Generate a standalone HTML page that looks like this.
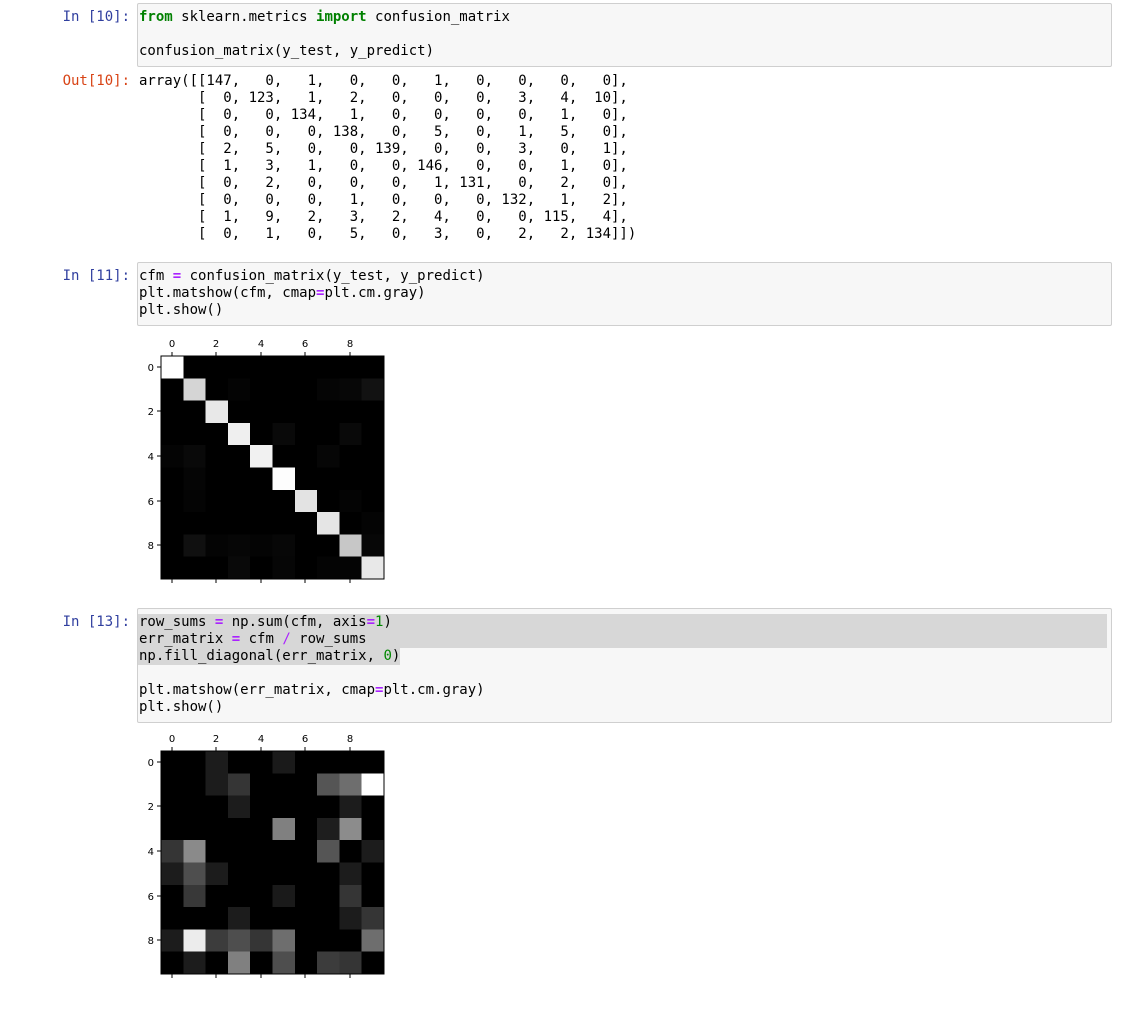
<!DOCTYPE html>
<html><head><meta charset="utf-8"><style>
body{margin:0;background:#fff;width:1128px;height:1011px;overflow:hidden;position:relative;font-family:"DejaVu Sans Mono","Liberation Mono",monospace;font-size:14px;}
pre{margin:0;font-family:inherit;font-size:14px;line-height:17px;position:absolute;}
.p{position:absolute;width:70px;text-align:right;left:60px;font-family:inherit;line-height:17px;}
.in{color:#303f9f}.out{color:#d84315}
.box{position:absolute;left:137px;width:973px;background:#f7f7f7;border:1px solid #cfcfcf;border-radius:2px;}
.k{color:#008000;font-weight:bold}.o{color:#aa22ff;font-weight:bold}.n{color:#008800}
.sel{position:absolute;background:#d7d7d7}
svg{position:absolute}
</style></head><body>
<div class="p in" style="top:9px">In&nbsp;[10]:</div>
<div class="box" style="top:3px;height:62px"></div>
<pre style="left:139px;top:9px"><span class="k">from</span> sklearn.metrics <span class="k">import</span> confusion_matrix

confusion_matrix(y_test, y_predict)</pre>
<div class="p out" style="top:73px">Out[10]:</div>
<pre style="left:139px;top:73px">array([[147,   0,   1,   0,   0,   1,   0,   0,   0,   0],
       [  0, 123,   1,   2,   0,   0,   0,   3,   4,  10],
       [  0,   0, 134,   1,   0,   0,   0,   0,   1,   0],
       [  0,   0,   0, 138,   0,   5,   0,   1,   5,   0],
       [  2,   5,   0,   0, 139,   0,   0,   3,   0,   1],
       [  1,   3,   1,   0,   0, 146,   0,   0,   1,   0],
       [  0,   2,   0,   0,   0,   1, 131,   0,   2,   0],
       [  0,   0,   0,   1,   0,   0,   0, 132,   1,   2],
       [  1,   9,   2,   3,   2,   4,   0,   0, 115,   4],
       [  0,   1,   0,   5,   0,   3,   0,   2,   2, 134]])</pre>

<div class="p in" style="top:268px">In&nbsp;[11]:</div>
<div class="box" style="top:262px;height:62px"></div>
<pre style="left:139px;top:268px">cfm <span class="o">=</span> confusion_matrix(y_test, y_predict)
plt.matshow(cfm, cmap<span class="o">=</span>plt.cm.gray)
plt.show()</pre>

<svg style="left:130px;top:330px" width="270" height="260" font-family="DejaVu Sans, Liberation Sans, sans-serif" font-size="10" fill="#000">
<g transform="translate(31,26) scale(22.3,22.3)" shape-rendering="crispEdges">
<rect width="10" height="10" fill="#000"/>
<rect x="0" y="0" width="1" height="1" fill="#fff"/>
<rect x="1" y="1" width="1" height="1" fill="#d5d5d5"/>
<rect x="2" y="2" width="1" height="1" fill="#e8e8e8"/>
<rect x="3" y="3" width="1" height="1" fill="#efefef"/>
<rect x="4" y="4" width="1" height="1" fill="#f1f1f1"/>
<rect x="5" y="5" width="1" height="1" fill="#fdfdfd"/>
<rect x="6" y="6" width="1" height="1" fill="#e3e3e3"/>
<rect x="7" y="7" width="1" height="1" fill="#e5e5e5"/>
<rect x="8" y="8" width="1" height="1" fill="#c7c7c7"/>
<rect x="9" y="9" width="1" height="1" fill="#e8e8e8"/>
<rect x="9" y="1" width="1" height="1" fill="#121212"/>
<rect x="7" y="1" width="1" height="1" fill="#050505"/>
<rect x="8" y="1" width="1" height="1" fill="#070707"/>
<rect x="3" y="1" width="1" height="1" fill="#040404"/>
<rect x="5" y="3" width="1" height="1" fill="#090909"/>
<rect x="8" y="3" width="1" height="1" fill="#090909"/>
<rect x="1" y="4" width="1" height="1" fill="#090909"/>
<rect x="0" y="4" width="1" height="1" fill="#040404"/>
<rect x="7" y="4" width="1" height="1" fill="#060606"/>
<rect x="1" y="5" width="1" height="1" fill="#050505"/>
<rect x="1" y="6" width="1" height="1" fill="#040404"/>
<rect x="8" y="6" width="1" height="1" fill="#040404"/>
<rect x="9" y="7" width="1" height="1" fill="#040404"/>
<rect x="1" y="8" width="1" height="1" fill="#101010"/>
<rect x="2" y="8" width="1" height="1" fill="#040404"/>
<rect x="3" y="8" width="1" height="1" fill="#060606"/>
<rect x="4" y="8" width="1" height="1" fill="#040404"/>
<rect x="5" y="8" width="1" height="1" fill="#070707"/>
<rect x="9" y="8" width="1" height="1" fill="#070707"/>
<rect x="3" y="9" width="1" height="1" fill="#090909"/>
<rect x="5" y="9" width="1" height="1" fill="#060606"/>
<rect x="7" y="9" width="1" height="1" fill="#040404"/>
<rect x="8" y="9" width="1" height="1" fill="#040404"/>
</g>
<rect x="31" y="26" width="223" height="223" fill="none" stroke="#000" stroke-width="1"/>
<g stroke="#000"><path d="M42 22v4M86 22v4M131 22v4M175 22v4M220 22v4M42 249v4M86 249v4M131 249v4M175 249v4M220 249v4M27 37h4M27 81h4M27 126h4M27 171h4M27 215h4"/></g>
<g text-anchor="middle"><text x="42" y="17">0</text><text x="86" y="17">2</text><text x="131" y="17">4</text><text x="175" y="17">6</text><text x="220" y="17">8</text></g>
<g text-anchor="end"><text x="24" y="41">0</text><text x="24" y="85">2</text><text x="24" y="130">4</text><text x="24" y="175">6</text><text x="24" y="219">8</text></g>
</svg>

<div class="p in" style="top:614px">In&nbsp;[13]:</div>
<div class="box" style="top:608px;height:113px"></div>
<div class="sel" style="left:138px;top:614px;width:969px;height:34px"></div>
<div class="sel" style="left:138px;top:648px;width:262px;height:17px"></div>
<pre style="left:139px;top:614px">row_sums <span class="o">=</span> np.sum(cfm, axis<span class="o">=</span><span class="n">1</span>)
err_matrix <span class="o">=</span> cfm <span class="o" style="font-weight:normal">/</span> row_sums
np.fill_diagonal(err_matrix, <span class="n">0</span>)

plt.matshow(err_matrix, cmap<span class="o">=</span>plt.cm.gray)
plt.show()</pre>

<svg style="left:130px;top:725px" width="270" height="260" font-family="DejaVu Sans, Liberation Sans, sans-serif" font-size="10" fill="#000">
<g transform="translate(31,26) scale(22.3,22.3)" shape-rendering="crispEdges">
<rect width="10" height="10" fill="#000"/>
<rect x="2" y="0" width="1" height="1" fill="#1c1c1c"/><rect x="5" y="0" width="1" height="1" fill="#1a1a1a"/>
<rect x="2" y="1" width="1" height="1" fill="#1c1c1c"/><rect x="3" y="1" width="1" height="1" fill="#353535"/><rect x="7" y="1" width="1" height="1" fill="#555"/><rect x="8" y="1" width="1" height="1" fill="#6e6e6e"/><rect x="9" y="1" width="1" height="1" fill="#fff"/>
<rect x="3" y="2" width="1" height="1" fill="#1c1c1c"/><rect x="8" y="2" width="1" height="1" fill="#1c1c1c"/>
<rect x="5" y="3" width="1" height="1" fill="#808080"/><rect x="7" y="3" width="1" height="1" fill="#1e1e1e"/><rect x="8" y="3" width="1" height="1" fill="#8c8c8c"/>
<rect x="0" y="4" width="1" height="1" fill="#353535"/><rect x="1" y="4" width="1" height="1" fill="#8a8a8a"/><rect x="7" y="4" width="1" height="1" fill="#555"/><rect x="9" y="4" width="1" height="1" fill="#1c1c1c"/>
<rect x="0" y="5" width="1" height="1" fill="#1c1c1c"/><rect x="1" y="5" width="1" height="1" fill="#4e4e4e"/><rect x="2" y="5" width="1" height="1" fill="#1c1c1c"/><rect x="8" y="5" width="1" height="1" fill="#1c1c1c"/>
<rect x="1" y="6" width="1" height="1" fill="#383838"/><rect x="5" y="6" width="1" height="1" fill="#1a1a1a"/><rect x="8" y="6" width="1" height="1" fill="#353535"/>
<rect x="3" y="7" width="1" height="1" fill="#1c1c1c"/><rect x="8" y="7" width="1" height="1" fill="#1c1c1c"/><rect x="9" y="7" width="1" height="1" fill="#353535"/>
<rect x="0" y="8" width="1" height="1" fill="#1c1c1c"/><rect x="1" y="8" width="1" height="1" fill="#ececec"/><rect x="2" y="8" width="1" height="1" fill="#3c3c3c"/><rect x="3" y="8" width="1" height="1" fill="#4e4e4e"/><rect x="4" y="8" width="1" height="1" fill="#353535"/><rect x="5" y="8" width="1" height="1" fill="#6e6e6e"/><rect x="9" y="8" width="1" height="1" fill="#6e6e6e"/>
<rect x="1" y="9" width="1" height="1" fill="#1c1c1c"/><rect x="3" y="9" width="1" height="1" fill="#808080"/><rect x="5" y="9" width="1" height="1" fill="#4e4e4e"/><rect x="7" y="9" width="1" height="1" fill="#3c3c3c"/><rect x="8" y="9" width="1" height="1" fill="#353535"/>
</g>
<rect x="31" y="26" width="223" height="223" fill="none" stroke="#000" stroke-width="1"/>
<g stroke="#000"><path d="M42 22v4M86 22v4M131 22v4M175 22v4M220 22v4M42 249v4M86 249v4M131 249v4M175 249v4M220 249v4M27 37h4M27 81h4M27 126h4M27 171h4M27 215h4"/></g>
<g text-anchor="middle"><text x="42" y="17">0</text><text x="86" y="17">2</text><text x="131" y="17">4</text><text x="175" y="17">6</text><text x="220" y="17">8</text></g>
<g text-anchor="end"><text x="24" y="41">0</text><text x="24" y="85">2</text><text x="24" y="130">4</text><text x="24" y="175">6</text><text x="24" y="219">8</text></g>
</svg>
</body></html>
